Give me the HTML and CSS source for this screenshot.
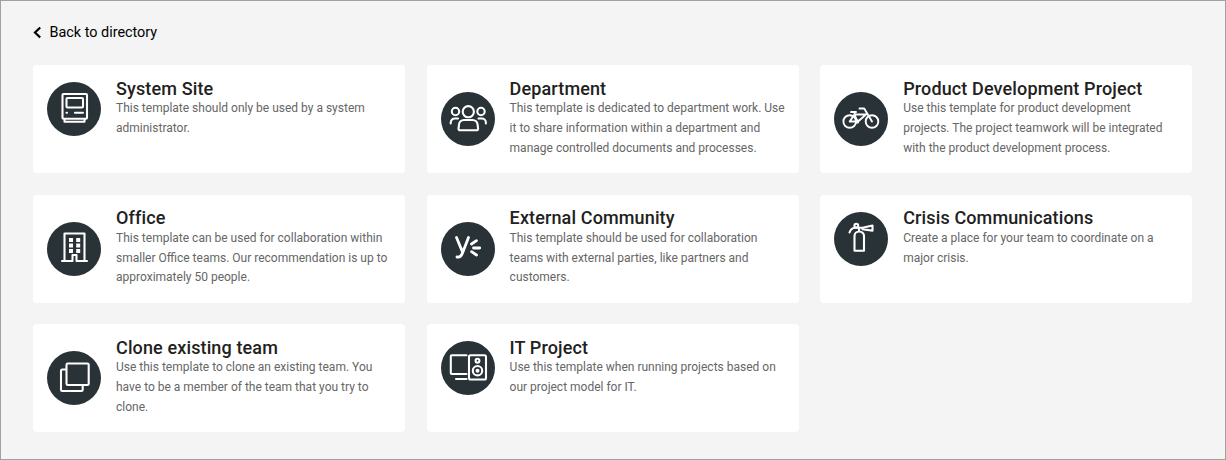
FILE: index.html
```html
<!DOCTYPE html>
<html lang="en">
<head>
<meta charset="utf-8">
<title>Team templates</title>
<link rel="stylesheet" href="styles.css">
</head>
<body>
<main class="page">
  <a class="back"><svg class="chevron" viewBox="0 0 9 12"><path d="M7.200 1 2 6l5.200 5"/></svg><span>Back to directory</span></a>
  <section class="grid">
    <article class="card">
      <svg class="icon" viewBox="0 0 54 54"><path d="M16.500 12h22.500a1 1 0 0 1 1 1V35.700a1 1 0 0 1-1 1H16.500a1 1 0 0 1-1-1V13a1 1 0 0 1 1-1zM17.500 37v2.800h20V37"/><rect x="19.500" y="16" width="16.500" height="9.500" rx="1"/><path d="M28 30.700h8M19.500 30.700h.5"/></svg>
      <div class="text"><h2>System Site</h2><p>This template should only be used by a system<br>administrator.</p></div>
    </article>
    <article class="card">
      <svg class="icon centered" viewBox="0 0 54 54"><circle cx="27.300" cy="19.700" r="5.600"/><circle cx="14.500" cy="19.500" r="3.700"/><circle cx="40" cy="19.500" r="3.700"/><path d="M19 38.300h16.600a1.500 1.500 0 0 0 1.500-1.700l-.5-4a5 5 0 0 0-5-4.600h-8.600a5 5 0 0 0-5 4.600l-.5 4a1.500 1.500 0 0 0 1.500 1.700zM9.700 31.500v-1a4 4 0 0 1 4-4H17M44.900 31.500v-1a4 4 0 0 0-4-4H37.500"/></svg>
      <div class="text"><h2>Department</h2><p>This template is dedicated to department work. Use<br>it to share information within a department and<br>manage controlled documents and processes.</p></div>
    </article>
    <article class="card">
      <svg class="icon centered bike" viewBox="0 0 54 54"><circle cx="15.700" cy="29.500" r="6.300"/><circle cx="38" cy="29.500" r="6.300"/><path d="M17 20h5M20 20l1 2.500M15.700 29.500l4.800-7h11.500M15.700 29.500h8.300l8-7M20.500 22.500l3 7M25.500 16.500h4.700l7.800 13"/><circle cx="23" cy="29.500" r="1.300"/></svg>
      <div class="text"><h2>Product Development Project</h2><p>Use this template for product development<br>projects. The project teamwork will be integrated<br>with the product development process.</p></div>
    </article>
    <article class="card">
      <svg class="icon centered" viewBox="0 0 54 54"><path d="M17.500 38.500V11.500h20v27M15 39h10.500M29.500 39h10.500M25.500 38.500v-5.500h4v5.500"/><path class="solid" d="M22 16h4v4h-4zM29.200 16h4v4h-4zM22 21.500h4v4h-4zM29.200 21.500h4v4h-4zM22 27h4v4h-4zM29.200 27h4v4h-4z"/></svg>
      <div class="text"><h2>Office</h2><p>This template can be used for collaboration within<br>smaller Office teams. Our recommendation is up to<br>approximately 50 people.</p></div>
    </article>
    <article class="card">
      <svg class="icon centered burst" viewBox="0 0 54 54"><path d="m15.500 15.500 6 14.500M27.500 15.500l-6 15.500q-1.700 4.700-5.500 4"/><path d="m30.500 22 5-3.300M32.500 26h6.200M30.500 29.700l5 3.300"/></svg>
      <div class="text"><h2>External Community</h2><p>This template should be used for collaboration<br>teams with external parties, like partners and<br>customers.</p></div>
    </article>
    <article class="card">
      <svg class="icon" viewBox="0 0 54 54"><path d="M20.500 38.800V24a4.750 4.500 0 0 1 9.500 0v14.800zM25 19v-3M15.500 20.500q1.500-4.300 5.500-4.700h7.500l10-2.300v5.300l-10-1.700"/><circle cx="22.300" cy="13.700" r="1.900"/></svg>
      <div class="text"><h2>Crisis Communications</h2><p>Create a place for your team to coordinate on a<br>major crisis.</p></div>
    </article>
    <article class="card">
      <svg class="icon centered" viewBox="0 0 54 54"><rect x="19.500" y="12.500" width="22.200" height="21.500" rx="1.200"/><path d="M19 18.500h-3.800a1.200 1.200 0 0 0-1.200 1.200v19.100a1.200 1.200 0 0 0 1.200 1.200h19.300a1.200 1.200 0 0 0 1.200-1.200V34.500"/></svg>
      <div class="text"><h2>Clone existing team</h2><p>Use this template to clone an existing team. You<br>have to be a member of the team that you try to<br>clone.</p></div>
    </article>
    <article class="card">
      <svg class="icon" viewBox="0 0 54 54"><path d="M25.500 14.200H10.800a1 1 0 0 0-1 1V32a1 1 0 0 0 1 1H25.500M15 38h10.500"/><rect x="28" y="14.200" width="17" height="24.300" rx="1.500"/><circle cx="36.500" cy="19.700" r="1.900"/><circle cx="36.500" cy="29.700" r="4.700"/><circle class="solid" cx="36.500" cy="29.700" r="2"/></svg>
      <div class="text"><h2>IT Project</h2><p>Use this template when running projects based on<br>our project model for IT.</p></div>
    </article>
  </section>
</main>
</body>
</html>
```
FILE: styles.css
```css
* { box-sizing: border-box; }
body { margin: 0; font-family: Roboto, "Liberation Sans", sans-serif; background: #f4f4f4; }
.page { width: 1226px; height: 460px; padding: 21px 32px 0; border: 1px solid #a0a0a0; overflow: hidden; }
.back { display: flex; align-items: center; gap: 7.5px; height: 20px; font-size: 14.4px; color: #000; }
.chevron { width: 9px; height: 13px; fill: none; stroke: #000; stroke-width: 2.2; }
.grid { display: grid; grid-template-columns: repeat(3, 372px); grid-auto-rows: 108px; gap: 21.6px; margin-top: 23px; }
.card { display: flex; gap: 15px; padding: 14px 0 0 14px; background: #fff; border-radius: 4px; }
.icon { flex: none; width: 54px; height: 54px; margin-top: 3px; border-radius: 50%; background: #293237; fill: none; stroke: #fff; stroke-width: 2.1; stroke-linejoin: round; stroke-linecap: round; }
.centered { margin-top: 13px; }
.bike { stroke-width: 1.9; }
.burst { stroke-width: 2.8; }
.icon .solid { fill: #fff; stroke: none; }
.text { white-space: nowrap; margin-top: -0.2px; }
h2 { margin: 0 0 1.4px; font-size: 18px; line-height: 19px; font-weight: 500; letter-spacing: 0.13px; color: #212121; }
p { margin: 0; font-size: 12px; line-height: 19.8px; color: #666; }
```
